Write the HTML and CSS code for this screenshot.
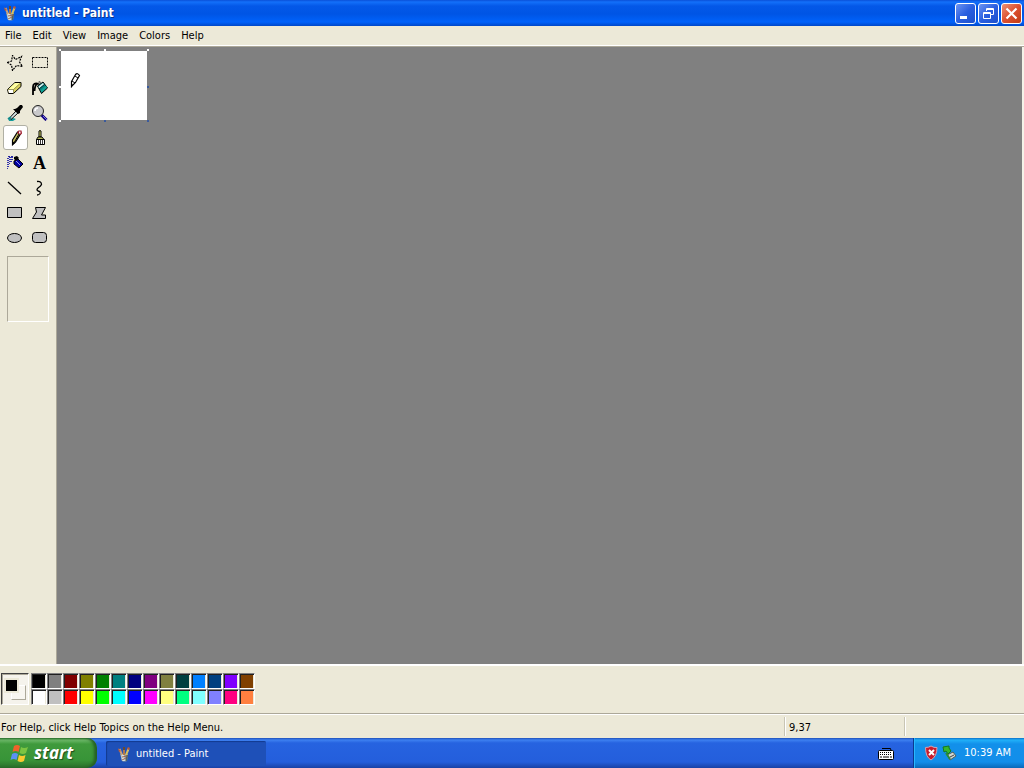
FILE: index.html
```html
<!DOCTYPE html>
<html lang="en">
<head>
<meta charset="utf-8">
<title>untitled - Paint</title>
<link rel="stylesheet" href="styles.css">
</head>
<body>
<svg class="defs" aria-hidden="true">
  <symbol id="paint-logo" viewBox="0 0 16 16">
    <path d="M4 8h8l-1 7q-3 1-5 0z" fill="#8a9aa0"/>
    <path d="M5 8h3l1 7H6z" fill="#d5dfdf"/>
    <path d="M10 9h2l-1 6h-1z" fill="#4d6068"/>
    <path d="M6 9L3.500 3" stroke="#c9a27c" stroke-width="2"/>
    <path d="M8 9V2" stroke="#b07848" stroke-width="2"/>
    <path d="M10 9l2.500-6" stroke="#d8c060" stroke-width="2"/>
    <path d="M2 2l3 3-2 1zM12 1l2 1-1 2-2-1z" fill="#b85838"/>
    <path d="M7 1h2v3H7z" fill="#6a4a30"/>
    <path d="M6 11l5-1M6 14l4-2" stroke="#a06a50"/>
  </symbol>
</svg>
<div class="desktop">
  <header class="titlebar">
    <svg class="app-icon"><use href="#paint-logo"/></svg>
    <h1 class="title">untitled - Paint</h1>
    <button class="win-btn" aria-label="Minimize"><svg viewBox="0 0 19 19"><path d="M4 12h7v3H4z" fill="#fff"/></svg></button>
    <button class="win-btn" aria-label="Restore"><svg viewBox="0 0 19 19" fill="none" stroke="#fff"><path d="M7.500 7V4.500h7v6H12M7 5.500h8M4.500 8.500h7v6h-7zM4 9.500h8"/></svg></button>
    <button class="win-btn close" aria-label="Close"><svg viewBox="0 0 19 19"><path d="M4.500 4.500l10 10M14.500 4.500l-10 10" stroke="#fff" stroke-width="2.200"/></svg></button>
  </header>
  <nav class="menubar">
    <button>File</button><button>Edit</button><button>View</button><button>Image</button><button>Colors</button><button>Help</button>
  </nav>
  <main class="workspace">
    <aside class="toolbox">
      <div class="tools">
        <button aria-label="Free-form select"><svg viewBox="0 0 16 16"><path d="M.5 7.500L4.500 6 5.500.5 8.500 4.500 14.500 1.500 12.500 7 15.500 11.500 9.500 10.500 5.500 15.500 4.500 10z" fill="none" stroke="#000" stroke-width="1.200" stroke-dasharray="2 1"/></svg></button>
        <button aria-label="Select"><svg viewBox="0 0 16 16"><path d="M.5 2.500h15v10H.5z" fill="none" stroke="#000" stroke-dasharray="2 1"/></svg></button>
        <button aria-label="Eraser"><svg viewBox="0 0 16 16"><path d="M.5 9.500L8 2.500h6v4L6.500 13.500h-5z" fill="#d8d060" stroke="#000"/><path d="M1 9.500L8 3h5.500L6.500 9.500z" fill="#ffffa0"/><path d="M1 9.500h5.500V13H2z" fill="#fff"/><path d="M.5 9.500h6v4M6.500 9.500l7-6.500" fill="none" stroke="#77733a" stroke-width=".7"/></svg></button>
        <button aria-label="Fill with color"><svg viewBox="0 0 16 16"><path d="M5.500 6L11 2l4.500 6-6 5.500z" fill="#087d7c" stroke="#000"/><path d="M6.500 6.500L11 3l1 1.500-5 4z" fill="#d7eeee"/><path d="M8.500 10.500l5.500-5 1 2-5.500 5z" fill="#10a494"/><path d="M7 9l6-5" stroke="#033"/><path d="M7 4Q1 2 1 7v8M5 4Q3 5 2.500 11" fill="none" stroke="#000" stroke-width="1.800"/><path d="M7 4V1.500l2 1" fill="none" stroke="#555"/></svg></button>
        <button aria-label="Pick color"><svg viewBox="0 0 16 16"><path d="M1 13h5l3 1-3 2H2z" fill="#159b9b"/><path d="M2.500 13l7-7.500 2 2-7.500 7z" fill="#d7e5e4" stroke="#000"/><path d="M8 4l2-1 3-3h2l1 2-3 4v2l-2 1-5-5z" fill="#000"/><path d="M1 14l3-2" stroke="#168b8b" stroke-width="2"/></svg></button>
        <button aria-label="Magnifier"><svg viewBox="0 0 16 16"><path d="M9.500 10l5 5" stroke="#100080" stroke-width="3"/><circle cx="6" cy="6" r="5.500" fill="#c8c8ca" stroke="#222"/><path d="M3 6q0-3 3-3" fill="none" stroke="#fff" stroke-width="1.500"/><path d="M11 11l4 4" stroke="#7474dc"/></svg></button>
        <button class="selected" aria-label="Pencil" aria-pressed="true"><svg viewBox="0 0 16 16"><path d="M5.500 10l5-8 3 2-5 8-3 2.500z" fill="#c8c068" stroke="#000" stroke-width="1.200"/><path d="M10 3l1.500-2.500h3l.5 3L13.500 5z" fill="#a01c2d"/><path d="M12 1.500h1.500v2H12z" fill="#fff"/><path d="M5 11l3 2-3 3z" fill="#000"/><path d="M7.500 12l4.500-8" stroke="#000"/></svg></button>
        <button aria-label="Brush"><svg viewBox="0 0 16 16"><path d="M7 1q1-1 2 0v6H7z" fill="#dce36b" stroke="#000"/><path d="M4.500 9.500L6 7h4l2 2.500z" fill="#b4b858" stroke="#000"/><path d="M4.500 9.500h8v5h-8z" fill="#fff" stroke="#000"/><path d="M6.500 10v5M8.500 10v5M10.500 10v5" stroke="#000" stroke-width=".8"/></svg></button>
        <button aria-label="Airbrush"><svg viewBox="0 0 16 16"><path d="M7 6l4-2 5 5-4 4-5-4z" fill="#0000a0" stroke="#000"/><path d="M7 2l3-1 2 2-3 3-2-2z" fill="#000"/><path d="M9 6l4 4" stroke="#8f91ef"/><path d="M.5 3v11M2.500 2v8M4.500 2v5" stroke="#3434ad" stroke-dasharray="1 1"/><path d="M1.500 2v10M3.500 1v7M5.500 1v4" stroke="#3434ad" stroke-dasharray="1 1" stroke-dashoffset="1"/><path d="M1 1.500h6" stroke="#2424a0" stroke-dasharray="2 1"/></svg></button>
        <button class="text-tool" aria-label="Text">A</button>
        <button aria-label="Line"><svg viewBox="0 0 16 16"><path d="M1 2l13 12" stroke="#000" stroke-width="1.300"/></svg></button>
        <button aria-label="Curve"><svg viewBox="0 0 16 16"><path d="M5 1.500q4.500-.5 4.500 3Q9 6 6 8q-2 2 0 3 3 .5 2 2.500-1 1.500-3 1.500" fill="none" stroke="#000" stroke-width="1.300"/></svg></button>
        <button aria-label="Rectangle"><svg viewBox="0 0 16 16"><path d="M.5 2.500h14v10H.5z" fill="#c0c0c0" stroke="#000"/></svg></button>
        <button aria-label="Polygon"><svg viewBox="0 0 16 16"><path d="M3.500 2.500h10l-4 7.500h4v3.500H.5L4.500 7z" fill="#c0c0c0" stroke="#000"/></svg></button>
        <button aria-label="Ellipse"><svg viewBox="0 0 16 16"><ellipse cx="7.500" cy="8" rx="7" ry="4.500" fill="#c0c0c0" stroke="#000"/></svg></button>
        <button aria-label="Rounded rectangle"><svg viewBox="0 0 16 16"><rect x=".5" y="2.500" width="14" height="10" rx="3" fill="#c0c0c0" stroke="#000"/></svg></button>
      </div>
      <div class="tool-options"></div>
    </aside>
    <section class="canvas-area">
      <div class="paper">
        <svg class="cursor" viewBox="0 0 16 16"><path d="M4.500 9.500l4-7q2-2 4 1l-4 7-4 4z" fill="#fff" stroke="#000" stroke-width="1.200"/><path d="M8 4l3 2M5 9l3 2" stroke="#000"/><path d="M4 11l2 2-2 3z" fill="#000"/></svg>
        <i class="handle top left"></i><i class="handle top center"></i><i class="handle top right"></i>
        <i class="handle middle left"></i><i class="handle active middle right"></i>
        <i class="handle bottom left"></i><i class="handle active bottom center"></i><i class="handle active bottom right"></i>
      </div>
    </section>
  </main>
  <section class="colorbox">
    <div class="current"><span class="chip back"></span><span class="chip fore"></span></div>
    <div class="palette">
      <button aria-label="Black" style="background-color:#000"></button><button aria-label="Gray" style="background-color:#808080"></button><button aria-label="Maroon" style="background-color:#800000"></button><button aria-label="Olive" style="background-color:#808000"></button><button aria-label="Green" style="background-color:#008000"></button><button aria-label="Teal" style="background-color:#008080"></button><button aria-label="Navy" style="background-color:#000080"></button><button aria-label="Purple" style="background-color:#800080"></button><button aria-label="Khaki" style="background-color:#808040"></button><button aria-label="Deep teal" style="background-color:#004040"></button><button aria-label="Azure" style="background-color:#0080ff"></button><button aria-label="Steel blue" style="background-color:#004080"></button><button aria-label="Violet" style="background-color:#8000ff"></button><button aria-label="Brown" style="background-color:#804000"></button>
      <button aria-label="White" style="background-color:#fff"></button><button aria-label="Silver" style="background-color:#c0c0c0"></button><button aria-label="Red" style="background-color:#f00"></button><button aria-label="Yellow" style="background-color:#ff0"></button><button aria-label="Lime" style="background-color:#0f0"></button><button aria-label="Cyan" style="background-color:#0ff"></button><button aria-label="Blue" style="background-color:#00f"></button><button aria-label="Magenta" style="background-color:#f0f"></button><button aria-label="Light yellow" style="background-color:#ffff80"></button><button aria-label="Spring green" style="background-color:#00ff80"></button><button aria-label="Pale cyan" style="background-color:#80ffff"></button><button aria-label="Periwinkle" style="background-color:#8080ff"></button><button aria-label="Rose" style="background-color:#ff0080"></button><button aria-label="Orange" style="background-color:#ff8040"></button>
    </div>
  </section>
  <div class="statusbar">
    <span class="hint">For Help, click Help Topics on the Help Menu.</span>
    <span class="coords">9,37</span>
    <span class="size"></span>
  </div>
  <footer class="taskbar">
    <button class="start">
      <svg viewBox="0 0 20 20"><path d="M4 3q3-2 6 0L8.500 9q-3-2-6 0z" fill="#f0622a"/><path d="M11 4q3 2 7 0l-2 6q-3 2-6.500 0z" fill="#7cc442"/><path d="M2 11q3-2 6 0l-1.500 6q-3-2-6 0z" fill="#5b91f4"/><path d="M9 12q3 2 6.500 0L14 18q-3 2-6.500 0z" fill="#fbc92f"/></svg>
      <span>start</span>
    </button>
    <button class="task"><svg class="app-icon"><use href="#paint-logo"/></svg><span>untitled - Paint</span></button>
    <svg class="keyboard" viewBox="0 0 16 16"><path d="M4 3l1 1 1-1 1 1 1-1 1 1 1-1 1 1 1-1 1 2" fill="none" stroke="#000"/><rect x=".5" y="5.500" width="15" height="9" rx="1" fill="#fff" stroke="#000"/><path d="M2 7.500h12M2 9.500h12" stroke="#000" stroke-dasharray="1 1"/><path d="M2 12h2M5 12h6M12 12h2" stroke="#000"/></svg>
    <div class="tray">
      <svg viewBox="0 0 16 16"><path d="M7 1q3 2 6 1.500 0 9-6 12.500Q1.500 12 1.500 2.500 5 2.500 7 1z" fill="#c81c2c" stroke="#d8a0b0"/><path d="M5 5l5 5M10 5l-5 5" stroke="#fff" stroke-width="2"/></svg>
      <svg viewBox="0 0 16 16"><path d="M5 10l6-3 3 4-6 4z" fill="#d4d8d4" stroke="#50605a"/><path d="M8 12l4-2" stroke="#444"/><path d="M1 2l6-1v2l2 3-3 3-2-3-2 1z" fill="#35b82e" stroke="#16781e"/><path d="M4 8l4 6" stroke="#2c8b38" stroke-width="2"/></svg>
      <time>10:39 AM</time>
    </div>
  </footer>
</div>
</body>
</html>
```
FILE: styles.css
```css
* { box-sizing: border-box; }
body {
  margin: 0;
  font: 11px/14px "DejaVu Sans Condensed", "Noto Sans", sans-serif;
  color: #000;
  background: #ece9d8;
}
button { margin: 0; padding: 0; border: 0; background: none; font: inherit; color: inherit; }
svg { display: block; flex: none; }
.defs { position: absolute; width: 0; height: 0; }
.desktop { display: flex; flex-direction: column; height: 100vh; overflow: hidden; }

.titlebar {
  display: flex; align-items: center; gap: 2px; flex: none;
  height: 26px; padding: 0 2px;
  background: linear-gradient(#0a50d8 0, #1370fa 2px, #0458e8 6px, #0055e5 14px, #0062fb 22px, #0048c8 26px);
}
.app-icon { width: 16px; height: 16px; }
.title {
  flex: 1; margin: 0 0 0 2px;
  font: bold 12px/16px "DejaVu Sans Condensed", "Noto Sans", sans-serif;
  color: #fff; text-shadow: 1px 1px #0a3590;
}
.win-btn {
  width: 21px; height: 21px;
  border: 1px solid #fff; border-radius: 3px;
  background: linear-gradient(135deg, #6c94f2, #2a5fe0 50%, #1c50cc);
}
.win-btn svg { width: 19px; height: 19px; }
.win-btn.close { background: linear-gradient(135deg, #ee9276, #dc5030 50%, #c03c14); }

.menubar { display: flex; flex: none; height: 20px; border-bottom: 1px solid #fff; }
.menubar button { padding: 0 6px 0 5px; line-height: 18px; }

.workspace { display: flex; flex: 1; min-height: 0; border-top: 1px solid #aca899; }
.toolbox { flex: none; width: 57px; padding: 3px; border-right: 1px solid #aca899; }
.tools { display: grid; grid-template-columns: 25px 25px; grid-auto-rows: 25px; }
.tools button { display: flex; align-items: center; justify-content: center; padding-right: 2px; border-radius: 3px; }
.tools svg { width: 16px; height: 16px; }
.tools .selected { background: #fff; border: 1px solid #b0b0a4; }
.tools .text-tool { font: bold 18px/20px "Liberation Serif", serif; }
.tool-options {
  height: 66px; margin: 6px 4px 0;
  border: 1px solid; border-color: #aca899 #fff #fff #aca899;
}
.canvas-area {
  flex: 1; min-width: 0; padding: 4px;
  background: #808080; border-right: 2px solid #f4f2e8;
}
.paper { position: relative; width: 86px; height: 69px; background: #fff; }
.cursor { position: absolute; left: 6px; top: 21px; width: 16px; height: 16px; }
.handle { position: absolute; width: 2px; height: 2px; background: #fff; }
.handle.active { background: #3a5a9c; }
.top { top: -2px; }
.middle { top: 35px; }
.bottom { bottom: -2px; }
.left { left: -2px; }
.center { left: 43px; }
.right { right: -2px; }

.colorbox {
  display: flex; flex: none; gap: 2px; align-items: flex-start;
  height: 50px; padding: 7px 1px;
  border-top: 2px solid #fff; border-bottom: 1px solid #aca899;
}
.current {
  position: relative; width: 28px; height: 32px;
  background: #f5f3ec;
  border: 1px solid; border-color: #404040 #fff #fff #404040;
  box-shadow: inset 1px 1px #aca899;
}
.chip { position: absolute; width: 15px; height: 15px; border: 1px solid; border-color: #fff #aca899 #aca899 #fff; }
.fore { left: 2px; top: 4px; background: #000; border-width: 2px; border-color: #ece9d8; }
.back { left: 9px; top: 11px; background: #f8f6f0; }
.palette { display: grid; grid-template-columns: repeat(14, 16px); grid-auto-rows: 16px; }
.palette button {
  border: 1px solid; border-color: #808080 #fff #fff #808080;
  box-shadow: inset 1px 1px #202020, inset -1px 0 #ece9d8;
}

.statusbar { display: flex; flex: none; height: 24px; padding: 2px 0; border-top: 1px solid #fff; }
.statusbar span { line-height: 22px; }
.hint { flex: 1; padding-left: 1px; }
.coords, .size { width: 120px; padding-left: 4px; border-left: 1px solid #c8c5b4; box-shadow: inset 1px 0 #fff; }

.taskbar {
  display: flex; flex: none; height: 30px;
  color: #fff;
  background: linear-gradient(#1f4fb8 0, #3d80f0 2px, #2663e0 5px, #245edc 24px, #1941a5 30px);
}
.start {
  display: flex; align-items: center; gap: 4px;
  width: 97px; padding-left: 10px;
  border-radius: 0 10px 10px 0;
  background: linear-gradient(#2f7a30 0, #6cb868 2px, #3f9a3c 6px, #389438 22px, #2a6e2a 30px);
  box-shadow: inset -3px 0 3px #256025;
  font: italic bold 17px/24px "Open Sans", "Noto Sans", sans-serif;
  text-shadow: 1px 1px 1px #1c4a1c;
}
.start svg { width: 20px; height: 20px; }
.task {
  display: flex; align-items: center; gap: 4px;
  width: 160px; margin: 3px 0 2px 9px; padding-left: 10px;
  border-radius: 2px; background: #1e50b8;
  box-shadow: inset 1px 1px 1px #123a90;
}
.keyboard { width: 16px; height: 16px; margin: 7px 19px 0 auto; }
.tray {
  display: flex; align-items: center; gap: 2px;
  width: 111px; padding-left: 10px;
  border-left: 1px solid #0a3a90;
  background: linear-gradient(#0c70c8 0, #20b0f8 2px, #1290ea 6px, #128eea 24px, #0a68b8 30px);
  box-shadow: inset 1px 0 #28b8ff;
}
.tray svg { width: 16px; height: 16px; }
.tray time { padding-left: 4px; }
```
